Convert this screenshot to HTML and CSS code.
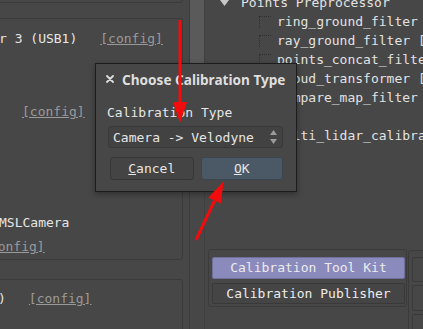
FILE: index.html
```html
<!DOCTYPE html>
<html lang="en">
<head>
    <meta charset="UTF-8">
    <title>Calibration Tool Kit</title>
    <link rel="stylesheet" href="styles.css">
</head>
<body>

<div class="main">
    <div class="left">
        <div class="boxes">
            <div class="group g1"></div>
            <div class="group g2">
                <div class="dev-row r1"><span class="dev-name">r 3 (USB1)</span><a class="config">[config]</a></div>
                <div class="dev-row r2"><a class="config">[config]</a></div>
                <div class="dev-row r3"><span class="dev-name">MSLCamera</span></div>
                <div class="dev-row r4"><a class="config">[config]</a></div>
            </div>
            <div class="group g3">
                <div class="dev-row r5"><span class="dev-name">)</span><a class="config">[config]</a></div>
            </div>
        </div>
    </div>

    <div class="scroll"><div class="handle"></div></div>

    <div class="right">
        <ul class="tree">
            <li class="node parent">
                <svg class="arrow" width="9" height="6" viewBox="0 0 9 6"><polygon points="0,0 9,0 4.5,6" fill="#c8c8c8"/></svg>
                <span>Points Preprocessor</span>
            </li>
            <li class="node child"><span class="check"></span><span>ring_ground_filter [config]</span></li>
            <li class="node child"><span class="check"></span><span>ray_ground_filter [config]</span></li>
            <li class="node child"><span class="check"></span><span>points_concat_filter</span></li>
            <li class="node child"><span class="check"></span><span>cloud_transformer [config]</span></li>
            <li class="node child"><span class="check"></span><span>compare_map_filter</span></li>
            <li class="node parent">
                <svg class="arrow" width="9" height="6" viewBox="0 0 9 6"><polygon points="0,0 9,0 4.5,6" fill="#c8c8c8"/></svg>
                <span>Fusion</span>
            </li>
            <li class="node child"><span class="check"></span><span>multi_lidar_calibrator</span></li>
        </ul>

        <div class="panels">
            <div class="group tools">
                <button class="tool active">Calibration Tool Kit</button>
                <button class="tool">Calibration Publisher</button>
            </div>
            <div class="group more">
                <div class="slot"></div>
                <div class="slot"></div>
                <div class="slot"></div>
            </div>
        </div>
    </div>
</div>

<div class="dialog">
    <div class="dialog-title">
        <svg width="8" height="8" viewBox="0 0 8 8"><path d="M1 1 L7 7 M7 1 L1 7" stroke="#dcdcdc" stroke-width="1.8" stroke-linecap="round"/></svg>
        <span>Choose Calibration Type</span>
    </div>
    <div class="dialog-body">
        <div class="label">Calibration Type</div>
        <div class="combo">
            <span>Camera -&gt; Velodyne</span>
            <svg class="spin" width="7" height="14" viewBox="0 0 7 14"><polygon points="3.5,0 7,5 0,5" fill="#9a9a9a"/><polygon points="0,9 7,9 3.5,14" fill="#9a9a9a"/></svg>
        </div>
        <div class="buttons">
            <button class="btn"><u>C</u>ancel</button>
            <button class="btn ok"><u>O</u>K</button>
        </div>
    </div>
</div>

<svg class="marks" width="423" height="329" viewBox="0 0 423 329">
    <line x1="180" y1="20" x2="180" y2="104" stroke="#f20c0c" stroke-width="3"/>
    <polygon points="173,102 187,102 180,123" fill="#f20c0c"/>
    <line x1="196" y1="240" x2="214.6" y2="200.5" stroke="#f20c0c" stroke-width="3"/>
    <polygon points="208.3,197.5 220.9,203.5 223.5,181.5" fill="#f20c0c"/>
</svg>

</body>
</html>
```

FILE: styles.css
```css
body {
    margin: 0;
    width: 423px;
    height: 329px;
    overflow: hidden;
    position: relative;
    background: #474747;
    color: #e6e6e6;
    font-family: "DejaVu Sans Mono", monospace;
    font-size: 13px;
}
.main {
    display: flex;
    height: 329px;
}

/* left device list */
.left {
    width: 189px;
    flex: none;
    overflow: hidden;
}
.boxes {
    margin-left: -10px;
    width: 193px;
    display: flex;
    flex-direction: column;
}
.group {
    flex: none;
    box-sizing: border-box;
    border: 1px solid #3b3b3b;
    border-radius: 3px;
}
.g1 {
    height: 21px;
    margin-top: -18px;
}
.g2 {
    margin-top: 15px;
    height: 242px;
    padding-top: 10px;
}
.g3 {
    margin-top: 19px;
    height: 80px;
    padding-top: 9px;
}
.dev-row {
    display: flex;
    height: 19px;
    line-height: 19px;
    white-space: nowrap;
}
.config {
    color: #9a9a9a;
    text-decoration: underline;
}
.r1 { margin-left: 8px; }
.r1 .config, .r5 .config { margin-left: 23px; }
.r2 { margin-left: 31px; margin-top: 54px; }
.r3 { margin-left: 8px; margin-top: 92px; }
.r4 { margin-left: -9px; margin-top: 5px; }
.r5 { margin-left: 7px; }

/* splitter scrollbar */
.scroll {
    width: 14px;
    flex: none;
    border-left: 1px solid #3c3c3c;
    border-right: 1px solid #404040;
}
.handle {
    height: 150px;
    background: #5a5a5a;
}

/* right tree + tools */
.right {
    flex: 1;
    min-width: 0;
    overflow: hidden;
}
.tree {
    list-style: none;
    margin: -7px 0 0 0;
    padding: 0;
    height: 256px;
}
.node {
    display: flex;
    align-items: center;
    height: 19px;
    white-space: nowrap;
    color: #e2e2e2;
}
.parent { padding-left: 15px; }
.parent .arrow {
    flex: none;
    margin-right: 12px;
}
.child { padding-left: 54px; }
.check {
    flex: none;
    box-sizing: border-box;
    width: 12px;
    height: 12px;
    margin-right: 6px;
    border-top: 1px dotted #2f2f2f;
    border-left: 1px dotted #2f2f2f;
}
.panels {
    display: flex;
    margin-left: 3px;
}
.tools {
    width: 199px;
    height: 58px;
    padding: 7px 1px 2px 3px;
    display: flex;
    flex-direction: column;
    gap: 4px;
}
.tool {
    height: 22px;
    padding: 0;
    border: 1px solid #393939;
    border-radius: 2px;
    background: #454545;
    color: #ececec;
    font-family: "DejaVu Sans Mono", monospace;
    font-size: 13px;
}
.tool.active {
    background: #8a8abc;
    border-color: #6f6f9c;
}
.more {
    margin-left: 1px;
    margin-top: 1px;
    width: 40px;
    height: 90px;
    padding: 6px 0 0 3px;
    display: flex;
    flex-direction: column;
    gap: 3px;
}
.slot {
    height: 29px;
    border: 1px solid #3a3a3a;
    border-radius: 2px;
}

/* modal dialog */
.dialog {
    position: absolute;
    left: 95px;
    top: 63px;
    width: 202px;
    height: 129px;
    box-sizing: border-box;
    background: #474747;
    border: 1px solid #1d1d1d;
    box-shadow: 0 2px 6px rgba(0, 0, 0, 0.35);
}
.dialog-title {
    height: 30px;
    display: flex;
    align-items: center;
    gap: 8px;
    padding-left: 10px;
    font-family: "Noto Sans", sans-serif;
    font-weight: bold;
    font-size: 13.6px;
    color: #dedede;
    white-space: nowrap;
}
.dialog-body {
    padding: 0 13px 0 12px;
}
.label {
    margin-top: 9px;
    height: 19px;
    line-height: 19px;
    margin-left: -1px;
}
.combo {
    margin-top: 4px;
    height: 22px;
    box-sizing: border-box;
    display: flex;
    align-items: center;
    justify-content: space-between;
    padding: 0 5px 0 4px;
    background: #424242;
    border: 1px solid #383838;
    border-radius: 3px;
}
.buttons {
    margin: 9px 0 0 2px;
    display: flex;
    gap: 7px;
}
.btn {
    height: 23px;
    width: 84px;
    padding: 0;
    background: #444444;
    border: 1px solid #363636;
    border-radius: 3px;
    color: #e6e6e6;
    font-family: "DejaVu Sans Mono", monospace;
    font-size: 13px;
}
.btn.ok {
    width: 83px;
    background: #4b5967;
    border-color: #3a4550;
}

.marks {
    position: absolute;
    left: 0;
    top: 0;
    pointer-events: none;
}
```
